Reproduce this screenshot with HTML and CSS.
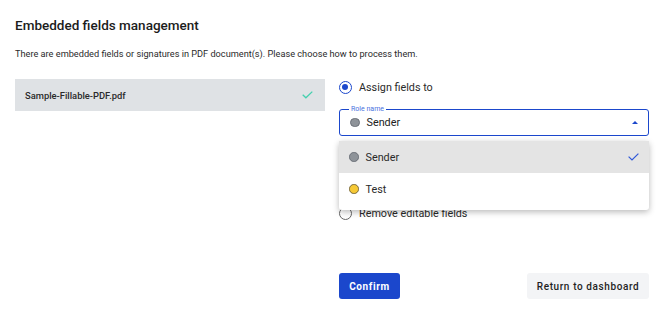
FILE: index.html
```html
<!DOCTYPE html>
<html lang="en">
  <head>
    <meta charset="UTF-8" />
    <title>Embedded fields management</title>
    <link rel="stylesheet" href="styles.css">
  </head>
  <body>
    <div class="dialog">
      <h2 class="dialog-title">Embedded fields management</h2>
      <p class="dialog-text">There are embedded fields or signatures in PDF document(s). Please choose how to process them.</p>

      <div class="dialog-body">
        <div class="file-list">
          <div class="file-item">
            <span>Sample-Fillable-PDF.pdf</span>
            <svg width="11" height="8" viewBox="0 0 11 8"><path d="M0.7 3.8 L3.9 6.8 L10.3 0.6" fill="none" stroke="#45d0ae" stroke-width="1.3"/></svg>
          </div>
        </div>

        <div class="options">
          <label class="radio-row">
            <span class="radio checked"></span>
            <span>Assign fields to</span>
          </label>

          <div class="select-wrap">
            <div class="select">
              <span class="select-label">Role name</span>
              <span class="dot gray"></span>
              <span class="select-value">Sender</span>
              <span class="caret"></span>
            </div>

            <ul class="menu">
              <li class="menu-item active">
                <span class="dot gray"></span>
                <span class="menu-text">Sender</span>
                <svg width="11" height="8" viewBox="0 0 11 8"><path d="M0.6 3.6 L4 7 L10.4 0.6" fill="none" stroke="#2f58d8" stroke-width="1.2"/></svg>
              </li>
              <li class="menu-item">
                <span class="dot yellow"></span>
                <span class="menu-text">Test</span>
              </li>
            </ul>
          </div>

          <label class="radio-row">
            <span class="radio"></span>
            <span>Remove editable fields</span>
          </label>
        </div>
      </div>

      <div class="dialog-actions">
        <button class="btn-primary">Confirm</button>
        <button class="btn-secondary">Return to dashboard</button>
      </div>
    </div>
  </body>
</html>
```

FILE: styles.css
```css
* {
  margin: 0;
  padding: 0;
  box-sizing: border-box;
}

body {
  font-family: Roboto, "Liberation Sans", sans-serif;
  background: white;
  color: #222;
}

.dialog {
  width: 664px;
  padding: 17px 15px 0 15px;
}

.dialog-title {
  font-size: 13.5px;
  font-weight: 500;
  color: #1c1c1c;
  line-height: 16px;
}

.dialog-text {
  margin-top: 15px;
  font-size: 9.2px;
  line-height: 12px;
  color: #2b2b2b;
}

.dialog-body {
  display: grid;
  grid-template-columns: 310px 310px;
  column-gap: 14px;
  margin-top: 19px;
}

.file-item {
  display: flex;
  align-items: center;
  justify-content: space-between;
  height: 32px;
  padding: 0 12px 0 10px;
  background: #dfe2e5;
  font-size: 9.4px;
  font-weight: 500;
  color: #2a2a2a;
}

.options {
  display: flex;
  flex-direction: column;
}

.radio-row {
  display: flex;
  align-items: center;
  gap: 7px;
  height: 13px;
  font-size: 10.8px;
  color: #2a2a2a;
}

.options > .radio-row:first-child {
  margin-top: 2px;
}

.radio {
  width: 13px;
  height: 13px;
  border: 1.2px solid #666;
  border-radius: 50%;
  position: relative;
}

.radio.checked {
  border-color: #1b47cc;
}

.radio.checked::after {
  content: "";
  position: absolute;
  left: 2.1px;
  top: 2.1px;
  width: 6.4px;
  height: 6.4px;
  border-radius: 50%;
  background: #1b47cc;
}

.select-wrap {
  position: relative;
  margin-top: 15px;
  margin-bottom: 71px;
}

.select {
  position: relative;
  display: flex;
  align-items: center;
  height: 27px;
  padding: 0 10px;
  border: 1.2px solid #1b47cc;
  border-radius: 3px;
  font-size: 10.8px;
}

.select-label {
  position: absolute;
  left: 9px;
  top: -5px;
  padding: 0 2px;
  background: white;
  font-size: 7px;
  line-height: 8px;
  color: #4a72e0;
}

.select-value {
  margin-left: 7px;
  flex: 1;
}

.caret {
  width: 0;
  height: 0;
  border-left: 3.5px solid transparent;
  border-right: 3.5px solid transparent;
  border-bottom: 3.5px solid #1b47cc;
}

.dot {
  width: 9.5px;
  height: 9.5px;
  border-radius: 50%;
  border: 1px solid #6b7078;
}

.dot.gray {
  background: #8e9399;
}

.dot.yellow {
  background: #f6c935;
  border-color: #7a6a3a;
}

.menu {
  position: absolute;
  top: 32px;
  left: 0;
  right: 0;
  list-style: none;
  background: white;
  border-radius: 3px;
  padding: 0 0 5px 0;
  box-shadow: 0 2px 6px rgba(0, 0, 0, 0.28);
  z-index: 2;
}

.menu-item {
  display: flex;
  align-items: center;
  height: 32px;
  padding: 0 10px;
  font-size: 10.8px;
  color: #2a2a2a;
}

.menu-item.active {
  background: #e4e4e4;
}

.menu-text {
  margin-left: 7px;
  flex: 1;
}

.dialog-actions {
  display: flex;
  justify-content: space-between;
  margin-left: 324px;
  width: 310px;
  margin-top: 53px;
}

.btn-primary,
.btn-secondary {
  height: 26px;
  border: none;
  border-radius: 3px;
  font-family: Roboto, "Liberation Sans", sans-serif;
  font-size: 10px;
  letter-spacing: 0.6px;
  cursor: pointer;
}

.btn-primary {
  width: 61px;
  background: #1b47cc;
  color: white;
  font-weight: 700;
}

.btn-secondary {
  width: 122px;
  background: #f3f4f6;
  color: #1f1f1f;
  font-weight: 500;
}
```
